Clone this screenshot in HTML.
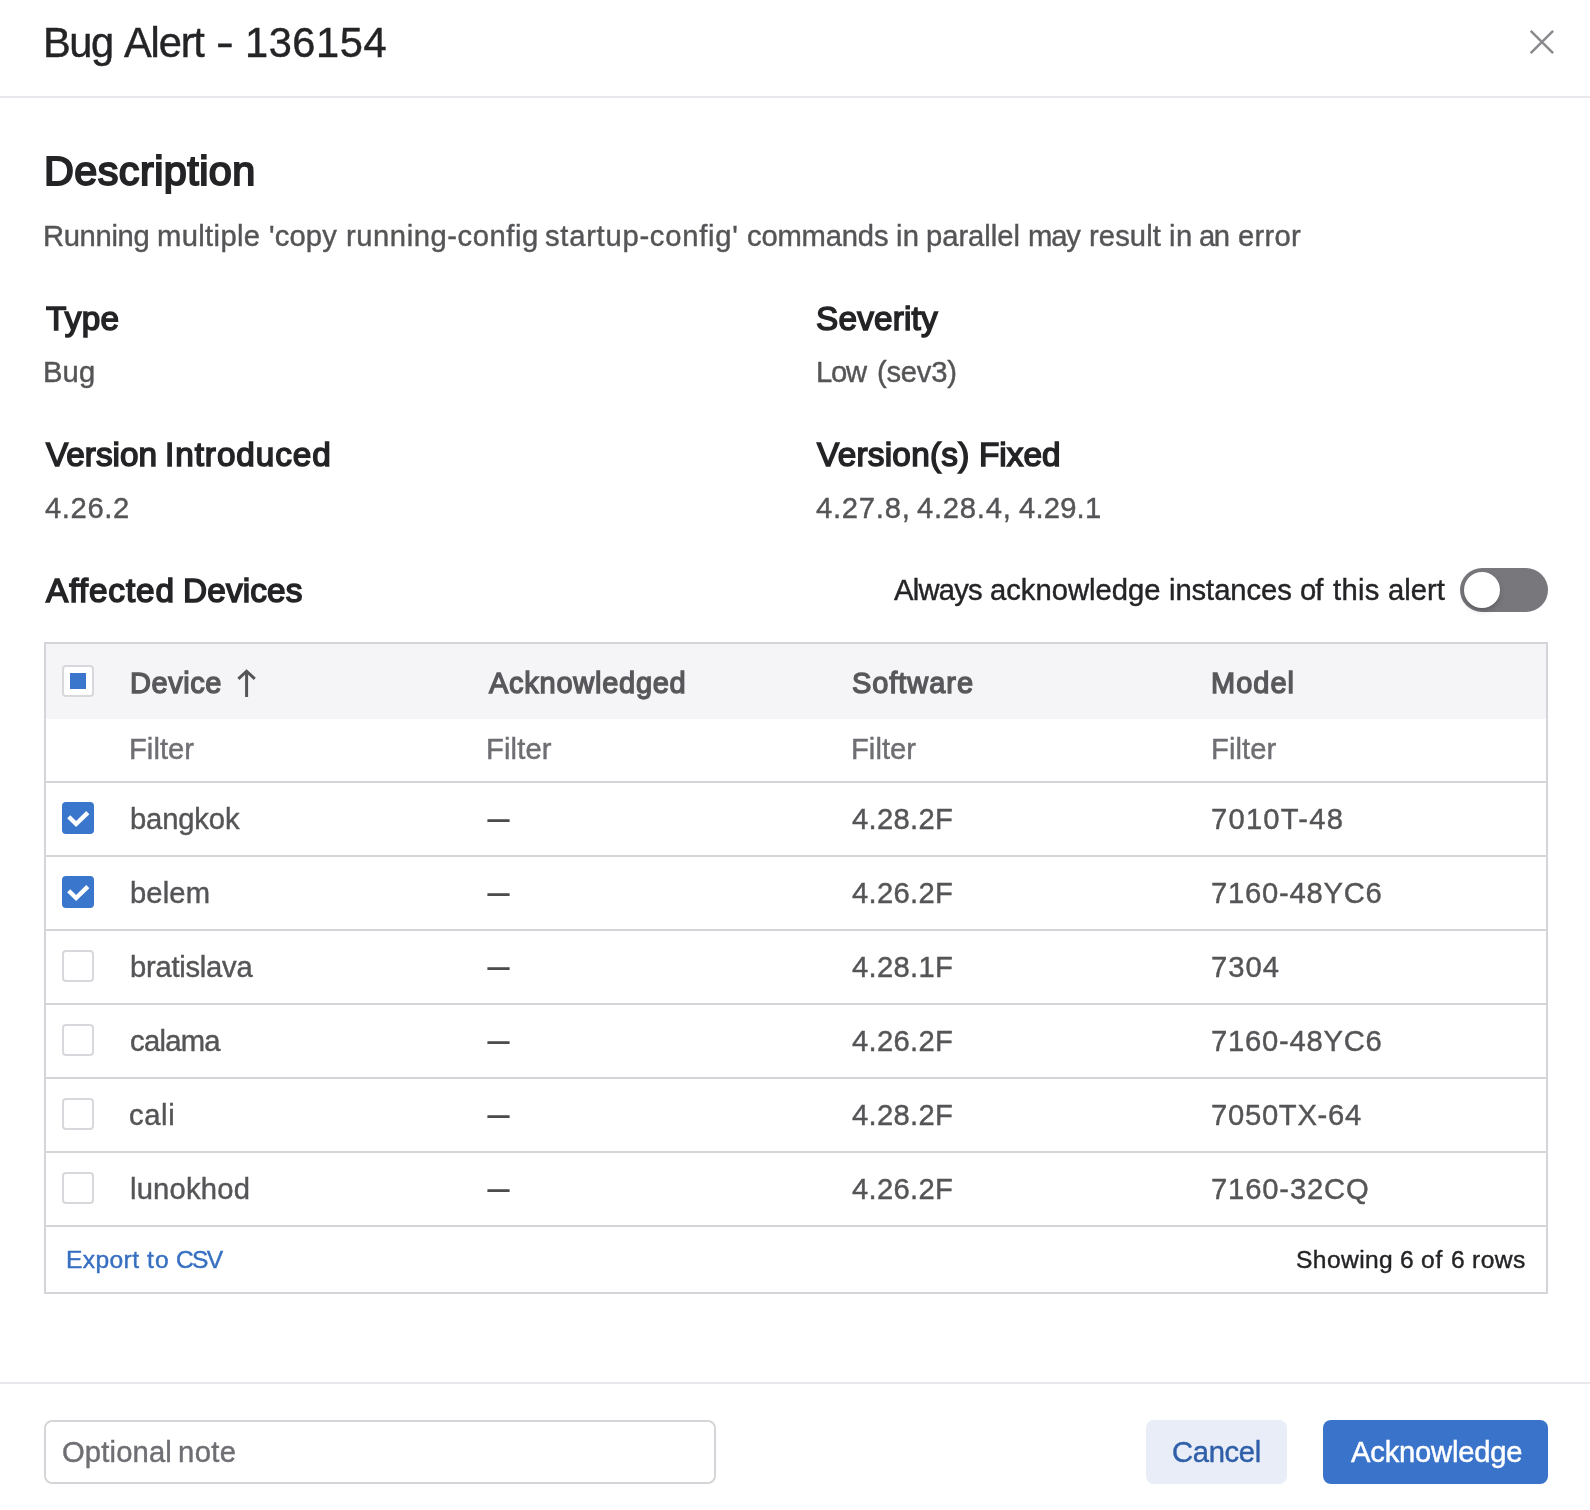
<!DOCTYPE html>
<html lang="en"><head><meta charset="utf-8"><title>Bug Alert - 136154</title>
<style>
html,body{margin:0;padding:0;background:#fff;}
body{width:1590px;height:1510px;position:relative;overflow:hidden;font-family:"Liberation Sans",Arial,sans-serif;}
.t{position:absolute;will-change:transform;white-space:nowrap;line-height:1;margin:0;padding:0;font-weight:400;}
.r{-webkit-text-stroke:0.42px currentColor;}
.b{font-weight:400;-webkit-text-stroke:0.046em currentColor;}
.g{margin:0;padding:0;height:0;}
.abs{position:absolute;box-sizing:border-box;}
.hl{position:absolute;left:0;width:1590px;height:2px;background:#e8e8ec;}
.rl{position:absolute;left:46px;width:1500px;height:2px;background:#d5d5d9;}
.cb{position:absolute;left:62px;width:32px;height:32px;box-sizing:border-box;border-radius:4px;}
.cb.off{background:#fff;border:2px solid #d8d8dc;}
.cb.on{background:#3a76cc;}
</style></head><body>
<div class="hl" style="top:96px"></div>
<svg class="abs" style="left:1522px;top:22px" width="40" height="40" viewBox="0 0 40 40"><path d="M8.7 8.8 L31.1 31.2 M31.1 8.8 L8.7 31.2" stroke="#8a8a8e" stroke-width="2.5" fill="none"/></svg>
<div class="abs" style="left:1460px;top:568px;width:88px;height:44px;border-radius:22px;background:#77777c"><div class="abs" style="left:4px;top:4px;width:36px;height:36px;border-radius:18px;background:#fff;box-shadow:0 3px 6px rgba(0,0,0,0.16),0 2px 2px rgba(0,0,0,0.08)"></div></div>
<div class="abs" style="left:44px;top:642px;width:1504px;height:652px;border:2px solid #d5d5d9;background:#fff"></div>
<div class="abs" style="left:46px;top:644px;width:1500px;height:75px;background:#f5f5f7"></div>
<div class="rl" style="top:781px"></div>
<div class="rl" style="top:855px"></div>
<div class="rl" style="top:929px"></div>
<div class="rl" style="top:1003px"></div>
<div class="rl" style="top:1077px"></div>
<div class="rl" style="top:1151px"></div>
<div class="rl" style="top:1225px"></div>
<div class="cb off" style="top:665px"><div class="abs" style="left:6px;top:6px;width:16px;height:16px;background:#3a76cc"></div></div>
<svg class="abs" style="left:230px;top:660px" width="34" height="44" viewBox="0 0 34 44"><path d="M16.6 11.3 V36.9 M8.4 18.9 L16.6 11.2 L24.8 18.9" stroke="#555558" stroke-width="3" fill="none" stroke-linejoin="miter"/></svg>
<div class="cb on" style="top:802px"><svg width="32" height="32" viewBox="0 0 32 32" style="display:block"><path d="M6.7 14.7 L14.1 22 L25.8 10.6" stroke="#fff" stroke-width="4.4" fill="none" stroke-linejoin="miter"/></svg></div>
<div class="cb on" style="top:876px"><svg width="32" height="32" viewBox="0 0 32 32" style="display:block"><path d="M6.7 14.7 L14.1 22 L25.8 10.6" stroke="#fff" stroke-width="4.4" fill="none" stroke-linejoin="miter"/></svg></div>
<div class="cb off" style="top:950px"></div>
<div class="cb off" style="top:1024px"></div>
<div class="cb off" style="top:1098px"></div>
<div class="cb off" style="top:1172px"></div>
<div class="hl" style="top:1382px"></div>
<div class="abs" style="left:44px;top:1420px;width:672px;height:64px;border:2px solid #d5d5d9;border-radius:8px;background:#fff"></div>
<div class="abs" style="left:1146px;top:1420px;width:141px;height:64px;border-radius:8px;background:#e8edf8"></div>
<div class="abs" style="left:1323px;top:1420px;width:225px;height:64px;border-radius:8px;background:#3a74ca"></div>
<div class="g"><span class="t r" style="left:43.00px;top:22.00px;font-size:41.6px;letter-spacing:-1.480px;color:#242427;">Bug</span> <span class="t r" style="left:124.00px;top:22.00px;font-size:41.6px;letter-spacing:-1.150px;color:#242427;">Alert</span> <span class="t r" style="left:218.00px;top:22.00px;font-size:41.6px;letter-spacing:0.000px;color:#242427;transform:scaleX(1.28);">-</span> <span class="t r" style="left:245.00px;top:22.00px;font-size:41.6px;letter-spacing:0.552px;color:#242427;">136154</span></div>
<div class="t b" style="left:44.00px;top:151.01px;font-size:41.4px;letter-spacing:0.420px;color:#242427;">Description</div>
<div class="g"><span class="t r" style="left:43.00px;top:222.00px;font-size:29.2px;letter-spacing:-0.347px;color:#555558;">Running</span> <span class="t r" style="left:157.00px;top:222.00px;font-size:29.2px;letter-spacing:0.360px;color:#555558;">multiple</span> <span class="t r" style="left:269.00px;top:222.00px;font-size:29.2px;letter-spacing:0.130px;color:#555558;">'copy</span> <span class="t r" style="left:346.00px;top:222.00px;font-size:29.2px;letter-spacing:0.563px;color:#555558;">running-config</span> <span class="t r" style="left:545.00px;top:222.00px;font-size:29.2px;letter-spacing:0.740px;color:#555558;">startup-config'</span> <span class="t r" style="left:747.00px;top:222.00px;font-size:29.2px;letter-spacing:-0.177px;color:#555558;">commands</span> <span class="t r" style="left:896.00px;top:222.00px;font-size:29.2px;letter-spacing:0.360px;color:#555558;">in</span> <span class="t r" style="left:926.00px;top:222.00px;font-size:29.2px;letter-spacing:-0.023px;color:#555558;">parallel</span> <span class="t r" style="left:1028.00px;top:222.00px;font-size:29.2px;letter-spacing:-1.160px;color:#555558;">may</span> <span class="t r" style="left:1089.00px;top:222.00px;font-size:29.2px;letter-spacing:0.104px;color:#555558;">result</span> <span class="t r" style="left:1169.00px;top:222.00px;font-size:29.2px;letter-spacing:0.480px;color:#555558;">in</span> <span class="t r" style="left:1199.00px;top:222.00px;font-size:29.2px;letter-spacing:-1.360px;color:#555558;">an</span> <span class="t r" style="left:1238.00px;top:222.00px;font-size:29.2px;letter-spacing:0.290px;color:#555558;">error</span></div>
<div class="t b" style="left:46.00px;top:302.00px;font-size:33.3px;letter-spacing:0.280px;color:#242427;">Type</div>
<div class="t r" style="left:43.00px;top:358.00px;font-size:29.2px;letter-spacing:0.140px;color:#555558;">Bug</div>
<div class="t b" style="left:816.00px;top:302.00px;font-size:33.3px;letter-spacing:0.200px;color:#242427;">Severity</div>
<div class="g"><span class="t r" style="left:816.00px;top:358.00px;font-size:29.2px;letter-spacing:-1.220px;color:#555558;">Low</span> <span class="t r" style="left:877.00px;top:358.00px;font-size:29.2px;letter-spacing:-0.232px;color:#555558;">(sev3)</span></div>
<div class="g"><span class="t b" style="left:46.00px;top:438.01px;font-size:33.3px;letter-spacing:-0.013px;color:#242427;">Version</span> <span class="t b" style="left:165.00px;top:438.01px;font-size:33.3px;letter-spacing:0.942px;color:#242427;">Introduced</span></div>
<div class="t r" style="left:45.00px;top:494.01px;font-size:29.2px;letter-spacing:0.640px;color:#555558;">4.26.2</div>
<div class="g"><span class="t b" style="left:817.00px;top:438.01px;font-size:33.3px;letter-spacing:0.267px;color:#242427;">Version(s)</span> <span class="t b" style="left:979.00px;top:438.01px;font-size:33.3px;letter-spacing:-0.000px;color:#242427;">Fixed</span></div>
<div class="g"><span class="t r" style="left:816.00px;top:494.01px;font-size:29.2px;letter-spacing:0.747px;color:#555558;">4.27.8,</span> <span class="t r" style="left:917.00px;top:494.01px;font-size:29.2px;letter-spacing:0.760px;color:#555558;">4.28.4,</span> <span class="t r" style="left:1019.00px;top:494.01px;font-size:29.2px;letter-spacing:0.200px;color:#555558;">4.29.1</span></div>
<div class="g"><span class="t b" style="left:46.00px;top:574.01px;font-size:33.3px;letter-spacing:0.926px;color:#242427;">Affected</span> <span class="t b" style="left:183.00px;top:574.01px;font-size:33.3px;letter-spacing:0.167px;color:#242427;">Devices</span></div>
<div class="g"><span class="t r" style="left:894.00px;top:576.00px;font-size:29.2px;letter-spacing:-0.768px;color:#242427;">Always</span> <span class="t r" style="left:990.00px;top:576.00px;font-size:29.2px;letter-spacing:0.008px;color:#242427;">acknowledge</span> <span class="t r" style="left:1169.00px;top:576.00px;font-size:29.2px;letter-spacing:-0.065px;color:#242427;">instances</span> <span class="t r" style="left:1300.00px;top:576.00px;font-size:29.2px;letter-spacing:-0.880px;color:#242427;">of</span> <span class="t r" style="left:1333.00px;top:576.00px;font-size:29.2px;letter-spacing:0.293px;color:#242427;">this</span> <span class="t r" style="left:1388.00px;top:576.00px;font-size:29.2px;letter-spacing:0.020px;color:#242427;">alert</span></div>
<div class="t b" style="left:130.00px;top:669.00px;font-size:29.0px;letter-spacing:0.560px;color:#58585c;">Device</div>
<div class="t b" style="left:489.00px;top:669.00px;font-size:29.0px;letter-spacing:0.738px;color:#58585c;">Acknowledged</div>
<div class="t b" style="left:852.00px;top:669.00px;font-size:29.0px;letter-spacing:0.943px;color:#58585c;">Software</div>
<div class="t b" style="left:1211.00px;top:669.00px;font-size:29.0px;letter-spacing:1.000px;color:#58585c;">Model</div>
<div class="t r" style="left:129.00px;top:735.00px;font-size:29.2px;letter-spacing:0.032px;color:#6e6e73;">Filter</div>
<div class="t r" style="left:486.00px;top:735.00px;font-size:29.2px;letter-spacing:0.120px;color:#6e6e73;">Filter</div>
<div class="t r" style="left:851.00px;top:735.00px;font-size:29.2px;letter-spacing:0.040px;color:#6e6e73;">Filter</div>
<div class="t r" style="left:1211.00px;top:735.00px;font-size:29.2px;letter-spacing:0.088px;color:#6e6e73;">Filter</div>
<div class="t r" style="left:130.00px;top:805.00px;font-size:29.2px;letter-spacing:-0.147px;color:#555558;">bangkok</div>
<div class="t r" style="left:852.00px;top:805.00px;font-size:29.2px;letter-spacing:0.307px;color:#555558;">4.28.2F</div>
<div class="t r" style="left:1211.00px;top:805.00px;font-size:29.2px;letter-spacing:1.223px;color:#555558;">7010T-48</div>
<div class="t r" style="left:488.00px;top:808.00px;font-size:21px;letter-spacing:0.000px;color:#4d4d50;-webkit-text-stroke:1.2px #4d4d50;">—</div>
<div class="t r" style="left:130.00px;top:879.00px;font-size:29.2px;letter-spacing:0.140px;color:#555558;">belem</div>
<div class="t r" style="left:852.00px;top:879.00px;font-size:29.2px;letter-spacing:0.307px;color:#555558;">4.26.2F</div>
<div class="t r" style="left:1211.00px;top:879.00px;font-size:29.2px;letter-spacing:0.773px;color:#555558;">7160-48YC6</div>
<div class="t r" style="left:488.00px;top:882.00px;font-size:21px;letter-spacing:0.000px;color:#4d4d50;-webkit-text-stroke:1.2px #4d4d50;">—</div>
<div class="t r" style="left:130.00px;top:953.00px;font-size:29.2px;letter-spacing:-0.253px;color:#555558;">bratislava</div>
<div class="t r" style="left:852.00px;top:953.00px;font-size:29.2px;letter-spacing:0.307px;color:#555558;">4.28.1F</div>
<div class="t r" style="left:1211.00px;top:953.00px;font-size:29.2px;letter-spacing:1.000px;color:#555558;">7304</div>
<div class="t r" style="left:488.00px;top:956.00px;font-size:21px;letter-spacing:0.000px;color:#4d4d50;-webkit-text-stroke:1.2px #4d4d50;">—</div>
<div class="t r" style="left:130.00px;top:1027.00px;font-size:29.2px;letter-spacing:-0.704px;color:#555558;">calama</div>
<div class="t r" style="left:852.00px;top:1027.00px;font-size:29.2px;letter-spacing:0.307px;color:#555558;">4.26.2F</div>
<div class="t r" style="left:1211.00px;top:1027.00px;font-size:29.2px;letter-spacing:0.773px;color:#555558;">7160-48YC6</div>
<div class="t r" style="left:488.00px;top:1030.01px;font-size:21px;letter-spacing:0.000px;color:#4d4d50;-webkit-text-stroke:1.2px #4d4d50;">—</div>
<div class="t r" style="left:129.00px;top:1101.00px;font-size:29.2px;letter-spacing:0.627px;color:#555558;">cali</div>
<div class="t r" style="left:852.00px;top:1101.00px;font-size:29.2px;letter-spacing:0.307px;color:#555558;">4.28.2F</div>
<div class="t r" style="left:1211.00px;top:1101.00px;font-size:29.2px;letter-spacing:0.730px;color:#555558;">7050TX-64</div>
<div class="t r" style="left:488.00px;top:1104.01px;font-size:21px;letter-spacing:0.000px;color:#4d4d50;-webkit-text-stroke:1.2px #4d4d50;">—</div>
<div class="t r" style="left:130.00px;top:1175.00px;font-size:29.2px;letter-spacing:0.200px;color:#555558;">lunokhod</div>
<div class="t r" style="left:852.00px;top:1175.00px;font-size:29.2px;letter-spacing:0.307px;color:#555558;">4.26.2F</div>
<div class="t r" style="left:1211.00px;top:1175.00px;font-size:29.2px;letter-spacing:0.855px;color:#555558;">7160-32CQ</div>
<div class="t r" style="left:488.00px;top:1178.01px;font-size:21px;letter-spacing:0.000px;color:#4d4d50;-webkit-text-stroke:1.2px #4d4d50;">—</div>
<div class="g"><span class="t r" style="left:66.00px;top:1248.01px;font-size:24.6px;letter-spacing:0.376px;color:#376fc1;">Export</span> <span class="t r" style="left:147.00px;top:1248.01px;font-size:24.6px;letter-spacing:1.240px;color:#376fc1;">to</span> <span class="t r" style="left:176.00px;top:1248.01px;font-size:24.6px;letter-spacing:-1.700px;color:#376fc1;">CSV</span></div>
<div class="g"><span class="t r" style="left:1296.00px;top:1248.01px;font-size:24.6px;letter-spacing:0.407px;color:#242427;">Showing</span> <span class="t r" style="left:1400.00px;top:1248.01px;font-size:24.6px;letter-spacing:0.000px;color:#242427;">6</span> <span class="t r" style="left:1421.00px;top:1248.01px;font-size:24.6px;letter-spacing:0.880px;color:#242427;">of</span> <span class="t r" style="left:1451.00px;top:1248.01px;font-size:24.6px;letter-spacing:0.000px;color:#242427;">6</span> <span class="t r" style="left:1472.00px;top:1248.01px;font-size:24.6px;letter-spacing:0.493px;color:#242427;">rows</span></div>
<div class="g"><span class="t r" style="left:62.00px;top:1438.00px;font-size:29.2px;letter-spacing:0.149px;color:#6e6e73;">Optional</span> <span class="t r" style="left:178.00px;top:1438.00px;font-size:29.2px;letter-spacing:0.427px;color:#6e6e73;">note</span></div>
<div class="t r" style="left:1172.00px;top:1438.00px;font-size:29.2px;letter-spacing:-0.336px;color:#2f5fa8;">Cancel</div>
<div class="t r" style="left:1351.00px;top:1438.00px;font-size:29.2px;letter-spacing:-0.208px;color:#ffffff;-webkit-text-stroke:0.45px #fff;">Acknowledge</div>
</body></html>
